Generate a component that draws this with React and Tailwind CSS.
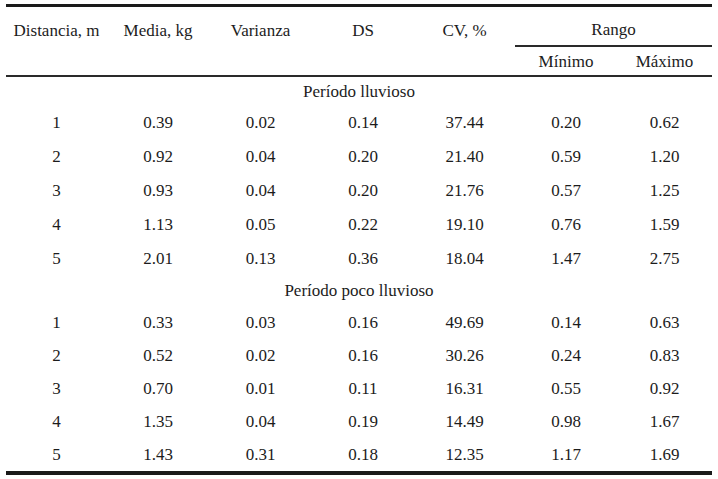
const cols = "grid grid-cols-[101px_102px_103px_102px_101px_102px_95px]";

const lluvioso = [
  ["1", "0.39", "0.02", "0.14", "37.44", "0.20", "0.62"],
  ["2", "0.92", "0.04", "0.20", "21.40", "0.59", "1.20"],
  ["3", "0.93", "0.04", "0.20", "21.76", "0.57", "1.25"],
  ["4", "1.13", "0.05", "0.22", "19.10", "0.76", "1.59"],
  ["5", "2.01", "0.13", "0.36", "18.04", "1.47", "2.75"],
];

const pocoLluvioso = [
  ["1", "0.33", "0.03", "0.16", "49.69", "0.14", "0.63"],
  ["2", "0.52", "0.02", "0.16", "30.26", "0.24", "0.83"],
  ["3", "0.70", "0.01", "0.11", "16.31", "0.55", "0.92"],
  ["4", "1.35", "0.04", "0.19", "14.49", "0.98", "1.67"],
  ["5", "1.43", "0.31", "0.18", "12.35", "1.17", "1.69"],
];

const Row = ({ values, height }) => (
  <div className={`${cols} ${height}`}>
    {values.map((v, i) => (
      <div key={i} className="flex items-center justify-center">
        {v}
      </div>
    ))}
  </div>
);

const App = () => {
  return (
    <div className="min-h-[479px] w-[718px] bg-white pl-[6px] pt-[4px] text-[17px] leading-none text-[#1c1c1c] [font-family:'Liberation_Serif',serif]">
      <div className="w-[706px] border-t-[3px] border-b-[4px] border-[#1a1a1a]">
        {/* header */}
        <div className="border-b-2 border-[#2a2a2a]">
          <div className={`${cols} h-[40px]`}>
            <div className="flex items-center justify-center pt-[6px]">Distancia, m</div>
            <div className="flex items-center justify-center pt-[6px]">Media, kg</div>
            <div className="flex items-center justify-center pt-[6px]">Varianza</div>
            <div className="flex items-center justify-center pt-[6px]">DS</div>
            <div className="flex items-center justify-center pt-[6px]">CV, %</div>
            <div className="col-span-2 flex items-center justify-center border-b-2 border-[#2a2a2a] pt-[6px]">
              Rango
            </div>
          </div>
          <div className={`${cols} h-[28px]`}>
            <div className="col-start-6 flex items-center justify-center">Mínimo</div>
            <div className="flex items-center justify-center">Máximo</div>
          </div>
        </div>

        <div className="flex h-[29px] items-center justify-center">Período lluvioso</div>
        {lluvioso.map((r) => (
          <Row key={r[0]} values={r} height="h-[33.8px]" />
        ))}

        <div className="flex h-[31px] items-center justify-center">Período poco lluvioso</div>
        {pocoLluvioso.map((r) => (
          <Row key={r[0]} values={r} height="h-[33px]" />
        ))}
      </div>
    </div>
  );
};

export default App;
